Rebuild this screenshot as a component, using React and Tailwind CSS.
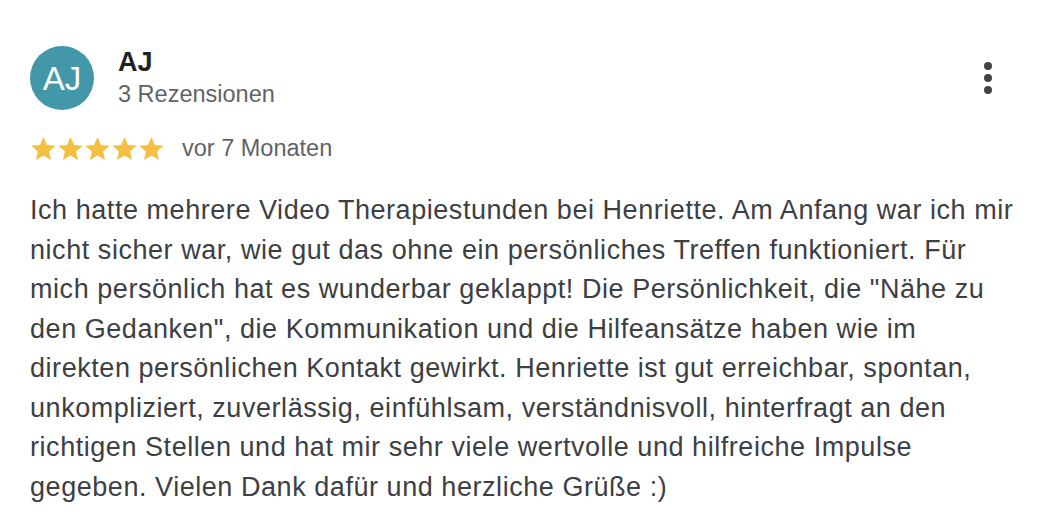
import React from 'react';

const Star = () => (
  <svg viewBox="0 0 24 24" className="w-[27px] h-[27px]" fill="#f4c041">
    <path d="M12 1.8l3.1 7.1 7.7.7-5.8 5.1 1.7 7.6L12 18.3l-6.7 4 1.7-7.6-5.8-5.1 7.7-.7z" />
  </svg>
);

const review =
  'Ich hatte mehrere Video Therapiestunden bei Henriette. Am Anfang war ich mir nicht sicher war, wie gut das ohne ein persönliches Treffen funktioniert. Für mich persönlich hat es wunderbar geklappt! Die Persönlichkeit, die "Nähe zu den Gedanken", die Kommunikation und die Hilfeansätze haben wie im direkten persönlichen Kontakt gewirkt. Henriette ist gut erreichbar, spontan, unkompliziert, zuverlässig, einfühlsam, verständnisvoll, hinterfragt an den richtigen Stellen und hat mir sehr viele wertvolle und hilfreiche Impulse gegeben. Vielen Dank dafür und herzliche Grüße :)';

export default function App() {
  return (
    <div className="w-[1042px] h-[524px] bg-white overflow-hidden font-['Liberation_Sans',Arial,sans-serif] pl-[30px] pr-[20px] pt-[46px]">
      <div className="flex items-start justify-between">
        <div className="flex items-center gap-6">
          <div className="w-16 h-16 rounded-full bg-[#4297a8] flex items-center justify-center text-white text-[33px] leading-none">
            AJ
          </div>
          <div className="flex flex-col">
            <span className="text-[27px] font-bold text-[#202124] leading-[32px]">AJ</span>
            <span className="text-[23.5px] text-[#5f6368] leading-[32px]">3 Rezensionen</span>
          </div>
        </div>
        <div className="flex flex-col items-center gap-[4px] pt-[16px] pr-[30px]">
          <span className="w-[8px] h-[8px] rounded-full bg-[#444]" />
          <span className="w-[8px] h-[8px] rounded-full bg-[#444]" />
          <span className="w-[8px] h-[8px] rounded-full bg-[#444]" />
        </div>
      </div>
      <div className="flex items-center mt-[21px]">
        <div className="flex">
          <Star /><Star /><Star /><Star /><Star />
        </div>
        <span className="ml-[17px] text-[23.5px] text-[#5f6368]">vor 7 Monaten</span>
      </div>
      <p className="mt-[25px] w-[992px] text-[27px] leading-[39.5px] tracking-[0.55px] text-[#3c4043]">{review}</p>
    </div>
  );
}
